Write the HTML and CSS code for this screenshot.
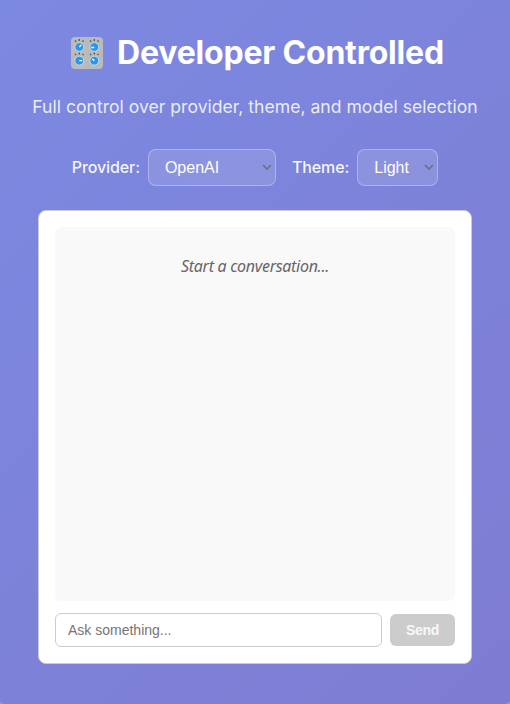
FILE: index.html
```html
<!DOCTYPE html>
<html lang="en">
<head>
<meta charset="utf-8">
<title>Developer Controlled</title>
<link rel="stylesheet" href="styles.css">
</head>
<body>
<main class="panel">
  <h1 class="title">
    <svg class="knobs" viewBox="0 0 32 32" aria-hidden="true">
      <rect width="32" height="32" rx="4" fill="#bababa"/>
      <path d="M4.2 3.4l.8 1.4M8.3 2v2M12.4 3.4l-.8 1.4M19.2 3.4l.8 1.4M23.3 2v2M27.4 3.4l-.8 1.4M4.2 16.8l.8 1.4M8.3 15.6v2M12.4 16.8l-.8 1.4M19.2 16.8l.8 1.4M23.3 15.6v2M27.4 16.8l-.8 1.4" stroke="#5c5c5c" stroke-width="1.4"/>
      <g fill="#2f94e5" stroke="#c5e6f8" stroke-width=".8">
        <circle cx="8.3" cy="10" r="4.4"/>
        <circle cx="23.3" cy="10" r="4.4"/>
        <circle cx="8.3" cy="23.7" r="4.4"/>
        <circle cx="23.3" cy="23.7" r="4.4"/>
      </g>
      <path d="M8.3 10l2-2M23.3 10.5h-3M8.3 23.7h3M23.3 23.7l-2-2" stroke="#fff" stroke-width="1.3"/>
    </svg>
    <span>Developer Controlled</span>
  </h1>
  <p class="subtitle">Full control over provider, theme, and model selection</p>
  <div class="controls">
    <div class="field">
      <label for="provider">Provider:</label>
      <select id="provider" class="select provider"><option>OpenAI</option></select>
    </div>
    <div class="field">
      <label for="theme">Theme:</label>
      <select id="theme" class="select theme"><option>Light</option></select>
    </div>
  </div>
  <section class="chat">
    <div class="messages"><p class="empty">Start a conversation...</p></div>
    <form class="composer">
      <input class="prompt" type="text" placeholder="Ask something...">
      <button class="send" type="button" disabled>Send</button>
    </form>
  </section>
</main>
</body>
</html>
```
FILE: styles.css
```css
* { box-sizing: border-box; }
body {
  margin: 0;
  height: 704px;
  overflow: hidden;
  background: #8f96e0;
  font-family: Inter, sans-serif;
  color: #fff;
}
.panel {
  height: 704px;
  padding: 33px 38px 40px;
  display: flex;
  flex-direction: column;
  align-items: center;
  border-radius: 0 0 6px 6px / 0 0 4px 4px;
  background: linear-gradient(135deg, #7c89e1, #7e7cd2);
}
.title {
  display: flex;
  align-items: center;
  gap: 14px;
  margin: 0 0 0 5px;
  height: 40px;
  font-size: 32px;
  font-weight: 700;
  letter-spacing: -.2px;
  white-space: nowrap;
}
.title span { line-height: 40px; }
.knobs { width: 32px; height: 32px; fill: none; }
.subtitle {
  margin: 20px -20px 0;
  height: 27px;
  line-height: 27px;
  font-size: 17.6px;
  font-weight: 430;
  white-space: nowrap;
  color: rgba(255, 255, 255, .86);
}
.controls { display: flex; gap: 16px; margin-top: 29px; }
.field {
  display: flex;
  align-items: center;
  gap: 8px;
  font-size: 16px;
  font-weight: 500;
  color: rgba(255, 255, 255, .95);
}
.field label { padding-bottom: 2px; letter-spacing: -.1px; }
.select {
  height: 37px;
  padding: 0 16px;
  border: 1px solid rgba(255, 255, 255, .3);
  border-radius: 8px;
  background-color: rgba(255, 255, 255, .12);
  color: #fff;
  font: 16px "Liberation Sans", Arial, sans-serif;
  appearance: none;
  background-image: url("data:image/svg+xml,%3Csvg xmlns='http://www.w3.org/2000/svg' viewBox='0 0 10 6'%3E%3Cpath d='M1 1l4 4 4-4' fill='none' stroke='%23707078' stroke-width='1.6'/%3E%3C/svg%3E");
  background-repeat: no-repeat;
  background-position: right 3px top 14px;
  background-size: 10px 6px;
}
.provider { width: 128px; }
.theme { width: 81px; }
.chat {
  width: 434px;
  height: 454px;
  margin-top: 24px;
  padding: 16px;
  border: 1px solid #ccc;
  border-radius: 8px;
  background: #fff;
  display: flex;
  flex-direction: column;
  gap: 12px;
}
.messages {
  height: 374px;
  padding-top: 27px;
  border-radius: 6px;
  background: #f9f9f9;
}
.empty {
  margin: 0;
  text-align: center;
  font: italic 16px/24px "Noto Sans", sans-serif;
  letter-spacing: -.3px;
  color: #666;
}
.composer { display: flex; align-items: center; gap: 8px; }
.prompt {
  flex: 1;
  height: 34px;
  min-width: 0;
  padding: 0 12px;
  border: 1px solid #ccc;
  border-radius: 6px;
  background: #fff;
  font: 14px "Liberation Sans", Arial, sans-serif;
}
.prompt::placeholder { color: #757575; }
.send {
  width: 65px;
  height: 32px;
  padding: 0;
  border: 0;
  border-radius: 6px;
  background: #ccc;
  color: #f8f8f8;
  font: bold 14px "Liberation Sans", Arial, sans-serif;
  letter-spacing: -.3px;
}
```
